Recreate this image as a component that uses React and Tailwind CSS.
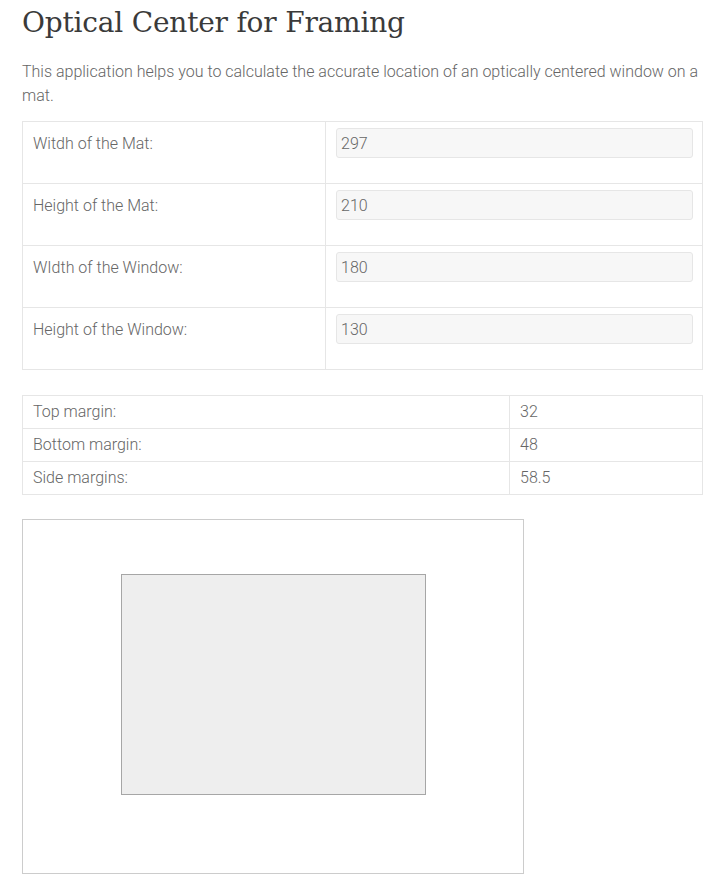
const inputs = [
  { label: "Witdh of the Mat:", value: "297" },
  { label: "Height of the Mat:", value: "210" },
  { label: "WIdth of the Window:", value: "180" },
  { label: "Height of the Window:", value: "130" },
];

const results = [
  { label: "Top margin:", value: "32" },
  { label: "Bottom margin:", value: "48" },
  { label: "Side margins:", value: "58.5" },
];

export default function App() {
  return (
    <div
      className="min-h-screen bg-white pl-[22px] pr-[19px] pt-[3px] text-[#666]"
      style={{ fontFamily: "Roboto, 'Liberation Sans', sans-serif" }}
    >
      <h1
        className="text-[28px] leading-[40px] text-[#3a3a3a] tracking-[-0.2px]"
        style={{ fontFamily: "'DejaVu Serif', serif" }}
      >
        Optical Center for Framing
      </h1>
      <p className="mt-[17px] text-[16px] leading-[24px] font-light">
        This application helps you to calculate the accurate location of an optically centered window on a mat.
      </p>

      <table className="mt-[13px] w-[681px] border-collapse text-[16px] font-light">
        <tbody>
          {inputs.map((row) => (
            <tr key={row.label} className="h-[62px]">
              <td className="w-[303px] border border-[#e6e6e6] px-[10px] pt-[7px] align-top">
                <div className="h-[30px] leading-[30px]">{row.label}</div>
              </td>
              <td className="border border-[#e6e6e6] pl-[10px] pr-[9px] pt-[6px] pb-[25px] align-top">
                <input
                  readOnly
                  value={row.value}
                  className="h-[30px] w-full rounded-[3px] border border-[#e6e6e6] bg-[#f7f7f7] px-[4px] text-[16px] font-light text-[#666] outline-none"
                />
              </td>
            </tr>
          ))}
        </tbody>
      </table>

      <table className="mt-[25px] w-[681px] border-collapse text-[16px] font-light">
        <tbody>
          {results.map((row) => (
            <tr key={row.label} className="h-[33px]">
              <td className="w-[487px] border border-[#e6e6e6] px-[10px]">{row.label}</td>
              <td className="border border-[#e6e6e6] px-[10px]">{row.value}</td>
            </tr>
          ))}
        </tbody>
      </table>

      <div className="mt-[24px] w-[502px] border border-[#cccccc]">
        <svg width="500" height="353" className="block">
          <rect x="98.5" y="54.5" width="304" height="220" fill="#eeeeee" stroke="#a6a6a6" strokeWidth="1" />
        </svg>
      </div>
    </div>
  );
}
